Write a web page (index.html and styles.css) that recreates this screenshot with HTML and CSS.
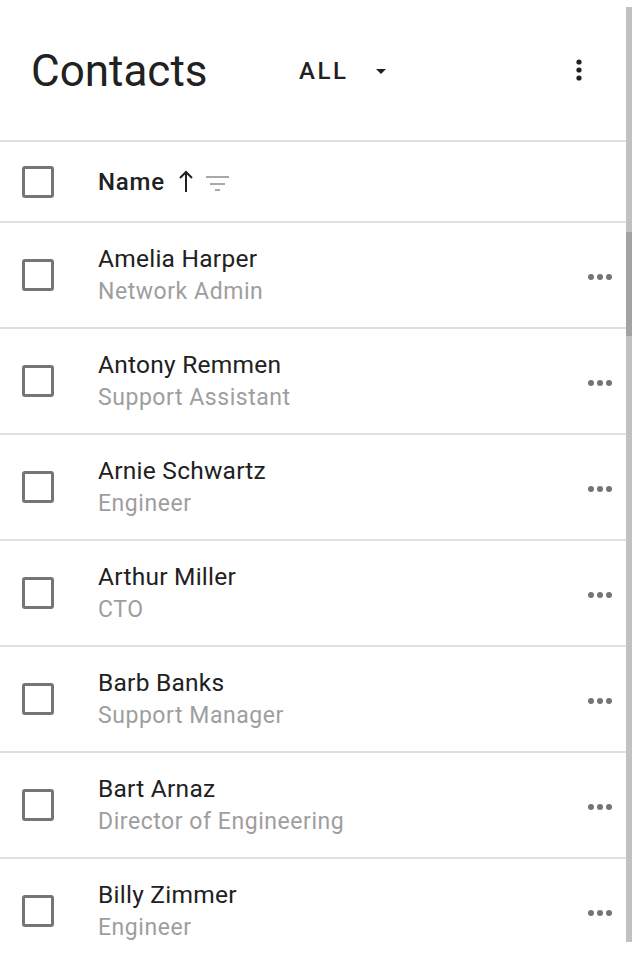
FILE: index.html
```html
<!DOCTYPE html>
<html>
<head>
<meta charset="utf-8">
<link rel="stylesheet" href="styles.css">
</head>
<body>
<div class="app">
  <div class="list">
    <header class="topbar">
      <h1 class="title">Contacts</h1>
      <div class="filter-select">
        <span class="filter-label">ALL</span>
        <svg class="caret" width="10" height="5" viewBox="0 0 10 5"><path d="M0 0h10L5 5z" fill="#212121"/></svg>
      </div>
      <svg class="kebab" width="6" height="22" viewBox="0 0 6 22"><circle cx="3" cy="3" r="2.6" fill="#212121"/><circle cx="3" cy="11" r="2.6" fill="#212121"/><circle cx="3" cy="19" r="2.6" fill="#212121"/></svg>
    </header>
    <div class="colhead">
      <span class="checkbox"></span>
      <span class="colname">Name</span>
      <svg class="sort" width="14" height="23" viewBox="0 0 14 23"><path d="M7 22V2M1 8l6-6 6 6" fill="none" stroke="#212121" stroke-width="2"/></svg>
      <svg class="filt" width="24" height="16" viewBox="0 0 24 16"><path d="M0 1h23M4 8h15M9 14h5" stroke="#a8a8a8" stroke-width="2"/></svg>
    </div>
    <div class="row"><span class="checkbox"></span><div class="text"><div class="name">Amelia Harper</div><div class="role">Network Admin</div></div><span class="more"><i></i><i></i><i></i></span></div>
    <div class="row"><span class="checkbox"></span><div class="text"><div class="name">Antony Remmen</div><div class="role">Support Assistant</div></div><span class="more"><i></i><i></i><i></i></span></div>
    <div class="row"><span class="checkbox"></span><div class="text"><div class="name">Arnie Schwartz</div><div class="role">Engineer</div></div><span class="more"><i></i><i></i><i></i></span></div>
    <div class="row"><span class="checkbox"></span><div class="text"><div class="name">Arthur Miller</div><div class="role">CTO</div></div><span class="more"><i></i><i></i><i></i></span></div>
    <div class="row"><span class="checkbox"></span><div class="text"><div class="name">Barb Banks</div><div class="role">Support Manager</div></div><span class="more"><i></i><i></i><i></i></span></div>
    <div class="row"><span class="checkbox"></span><div class="text"><div class="name">Bart Arnaz</div><div class="role">Director of Engineering</div></div><span class="more"><i></i><i></i><i></i></span></div>
    <div class="row"><span class="checkbox"></span><div class="text"><div class="name">Billy Zimmer</div><div class="role">Engineer</div></div><span class="more"><i></i><i></i><i></i></span></div>
  </div>
  <div class="scrollbar"><div class="thumb"></div></div>
</div>
</body>
</html>
```

FILE: styles.css
```css
html, body {
  margin: 0;
  padding: 0;
  background: #ffffff;
  font-family: Roboto, "Noto Sans", "Liberation Sans", sans-serif;
  color: #212121;
  overflow: hidden;
}

.app {
  display: flex;
  align-items: flex-start;
  width: 640px;
  height: 960px;
  overflow: hidden;
}

.list {
  width: 626px;
  flex: none;
}

.topbar {
  display: flex;
  align-items: center;
  height: 140px;
  border-bottom: 2px solid #e0e0e0;
  padding-left: 31px;
  box-sizing: content-box;
}

.title {
  margin: 0;
  font-size: 44px;
  font-weight: 400;
  line-height: 1;
  width: 268px;
  margin-top: 2px;
}

.filter-select {
  display: flex;
  align-items: center;
  margin-top: 2px;
}

.filter-label {
  font-size: 24px;
  font-weight: 500;
  letter-spacing: 2.6px;
}

.caret {
  margin-left: 27px;
  display: block;
}

.kebab {
  display: block;
  margin-left: auto;
  margin-right: 44px;
}

.colhead {
  display: flex;
  align-items: center;
  height: 79px;
  border-bottom: 2px solid #e0e0e0;
  padding-left: 22px;
}

.checkbox {
  display: block;
  flex: none;
  width: 26px;
  height: 26px;
  border: 3px solid #757575;
  border-radius: 3px;
}

.colname {
  margin-left: 44px;
  font-size: 24px;
  font-weight: 500;
  letter-spacing: 0.8px;
}

.sort {
  display: block;
  margin-left: 14px;
}

.filt {
  display: block;
  margin-left: 13px;
  margin-top: 4px;
}

.row {
  display: flex;
  align-items: center;
  height: 104px;
  border-bottom: 2px solid #e0e0e0;
  padding-left: 22px;
}

.text {
  margin-left: 44px;
  flex: 1;
}

.name {
  font-size: 24.5px;
  line-height: 32px;
  letter-spacing: 0.25px;
  color: #212121;
}

.role {
  font-size: 23px;
  line-height: 32px;
  color: #9e9e9e;
  letter-spacing: 0.55px;
  margin-top: 1px;
}

.more {
  display: flex;
  gap: 3px;
  margin-right: 14px;
  margin-top: 4px;
}

.more i {
  display: block;
  width: 6px;
  height: 6px;
  border-radius: 50%;
  background: #757575;
}

.scrollbar {
  flex: none;
  width: 6px;
  height: 935px;
  margin-top: 7px;
  background: #c1c1c1;
  padding-top: 225px;
  box-sizing: border-box;
}

.thumb {
  height: 104px;
  background: #a3a3a3;
}
```
